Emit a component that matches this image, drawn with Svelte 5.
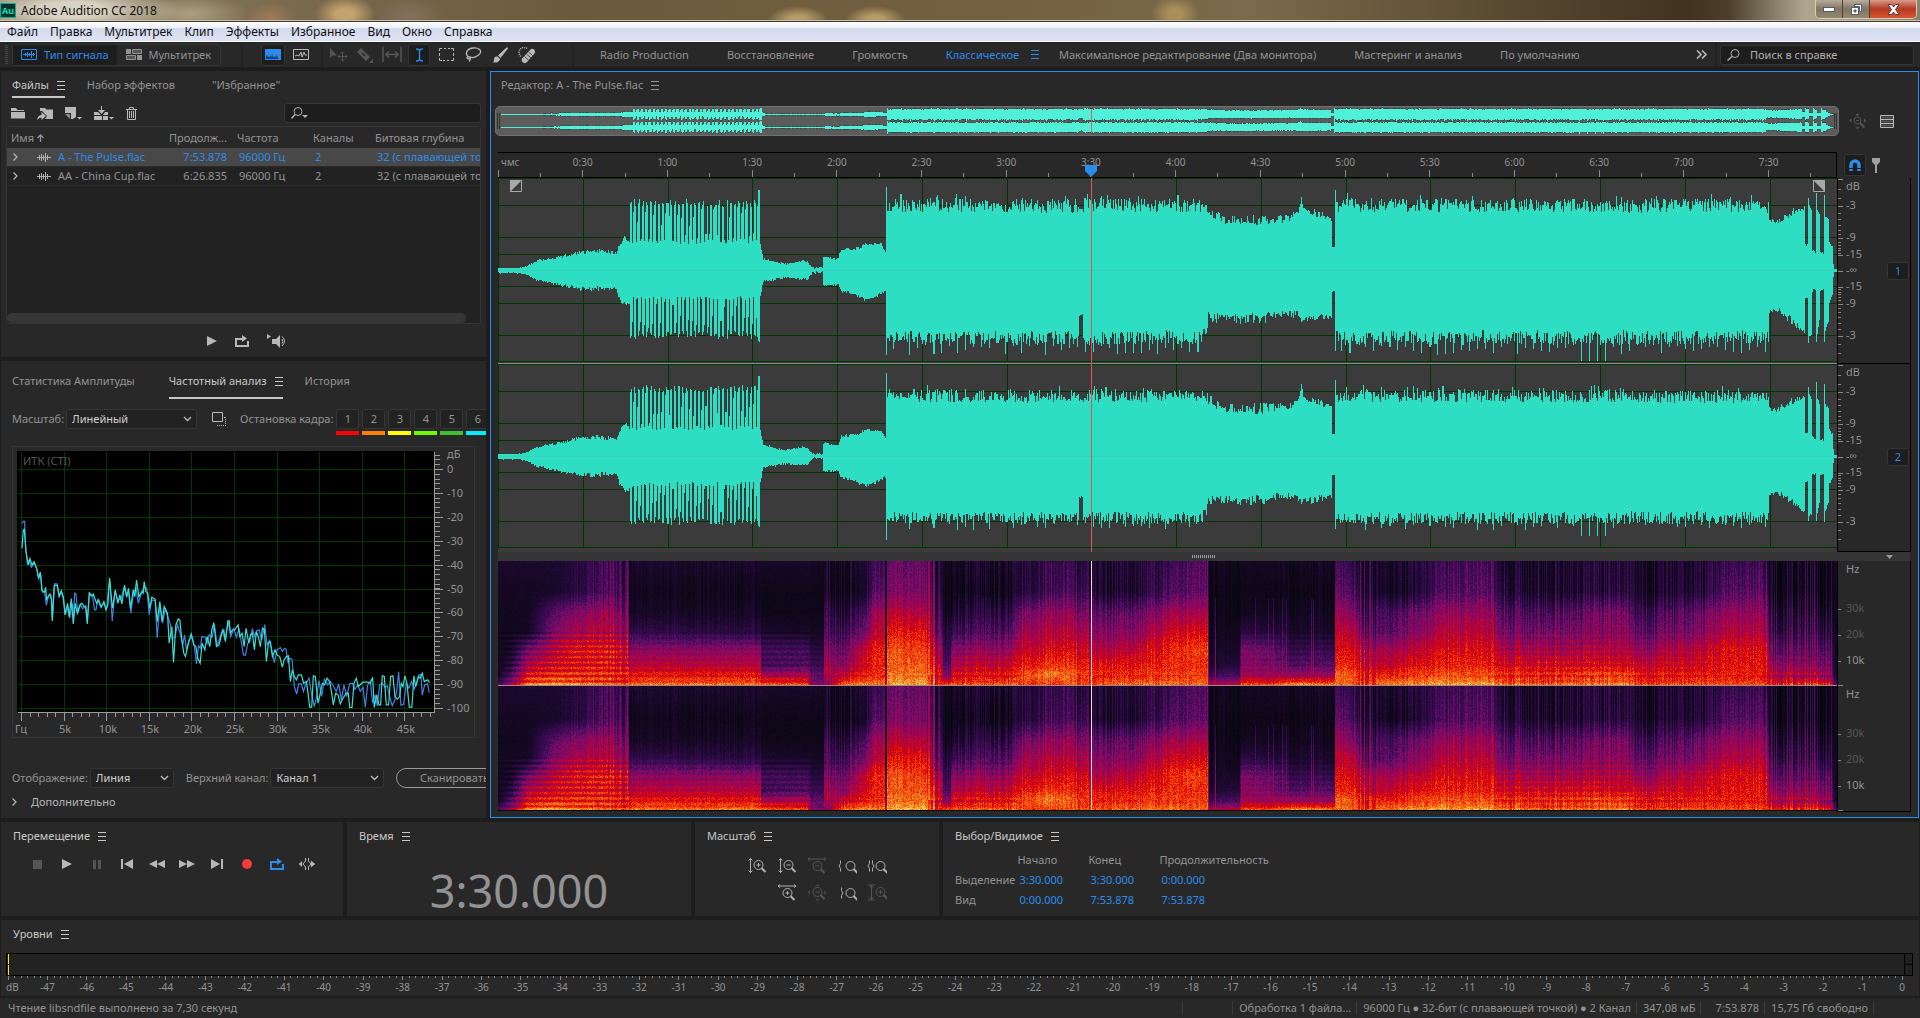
<!--
  Audio editor workspace: file list, frequency analysis, waveform and
  spectral editor, transport, zoom, selection and level meters.
-->
<script>
  const DURATION = 473.878;
  const PLAYHEAD = 210;
  // the envelope and spectrum tables below are written for this lane width
  const BASE_WIDTH = 1339;

  const menus = ['Файл', 'Правка', 'Мультитрек', 'Клип', 'Эффекты', 'Избранное', 'Вид', 'Окно', 'Справка'];

  const workspaces = [
    'Radio Production',
    'Восстановление',
    'Громкость',
    'Классическое',
    'Максимальное редактирование (Два монитора)',
    'Мастеринг и анализ',
    'По умолчанию',
  ];

  const files = [
    { name: 'A - The Pulse.flac', length: '7:53.878', rate: '96000 Гц', channels: 2, depth: '32 (с плавающей точкой)' },
    { name: 'AA - China Cup.flac', length: '6:26.835', rate: '96000 Гц', channels: 2, depth: '32 (с плавающей точкой)' },
  ];

  const holds = ['#ff0000', '#ff8000', '#ffff00', '#70f800', '#40c030', '#00f0ff'];

  const timeMarks = Array.from({ length: 15 }, (_, i) => (i + 1) * 30);
  const halfMarks = Array.from({ length: 16 }, (_, i) => i * 30 + 15);
  const levelMarks = Array.from({ length: 48 }, (_, i) => i - 47);
  const levelTicks = Array.from({ length: 289 }, (_, i) => i);

  const dbLabels = [-3, -9, -15];
  const dbTicks = [0, -1, -2, -3, -4, -5, -6, -7, -8, -9, -10, -11, -12, -13, -14, -15];

  const clock = (s) => `${Math.floor(s / 60)}:${String(s % 60).padStart(2, '0')}`;
  const pct = (s) => `${(s / DURATION) * 100}%`;
  const dbOffset = (db) => Math.round(92 * Math.pow(10, db / 20));

  function hash(a, b) {
    let n = Math.imul(a + 1, 374761393) ^ Math.imul(b + 7, 668265263);
    n = Math.imul(n ^ (n >>> 13), 1274126177);
    n = Math.imul(n ^ (n >>> 15), 668265263);
    return ((n ^ (n >>> 16)) >>> 0) / 4294967296;
  }

  // [x, top, bottom, jitter]
  const envelope = [
    [0, 2, 2, 1], [20, 2, 2, 1], [29, 4, 4, 1], [38, 9, 9, 2], [61, 13, 14, 3], [84, 18, 18, 4],
    [102, 19, 18, 5], [118, 17, 17, 4], [121, 25, 28, 4], [127, 33, 34, 4], [131, 28, 32, 3],
    [132, 66, 66, 5], [259, 66, 66, 5], [260, 80, 70, 1], [261, 80, 70, 1], [262, 25, 25, 2], [265, 11, 10, 2],
    [286, 6, 7, 2], [304, 9, 8, 2], [309, 8, 8, 2], [314, 2, 2, 2], [324, 2, 1, 2], [325, 13, 14, 2],
    [339, 11, 14, 2], [343, 20, 20, 3], [359, 22, 25, 3], [368, 26, 29, 3], [382, 26, 23, 3], [387, 18, 20, 2],
    [388, 83, 83, 1], [389, 65, 67, 14], [580, 64, 67, 14], [581, 60, 44, 3], [584, 60, 44, 3], [585, 65, 67, 14],
    [702, 64, 66, 14], [708, 62, 62, 12], [710, 60, 46, 12], [725, 50, 48, 9], [762, 50, 48, 12],
    [789, 52, 42, 9], [798, 57, 44, 7], [801, 60, 46, 6], [803, 74, 50, 5], [805, 62, 48, 5], [813, 58, 48, 7],
    [821, 56, 46, 8], [833, 52, 44, 7],
    [834, 23, 20, 1], [836, 23, 20, 1], [837, 80, 80, 1], [838, 65, 67, 14], [1270, 64, 66, 14],
    [1271, 50, 42, 4], [1278, 48, 38, 6], [1294, 58, 50, 8], [1306, 62, 61, 4], [1307, 25, 27, 2],
    [1309, 25, 27, 2], [1310, 72, 72, 1], [1311, 65, 66, 2], [1313, 60, 64, 2], [1314, 20, 20, 2],
    [1317, 18, 18, 2], [1318, 78, 70, 2], [1319, 60, 62, 2], [1321, 56, 50, 3], [1322, 18, 20, 2],
    [1325, 17, 18, 2], [1326, 75, 72, 1], [1327, 54, 60, 3], [1330, 50, 50, 3], [1331, 27, 30, 3],
    [1334, 23, 24, 2], [1335, 6, 6, 2], [1336, 1, 1, 1], [1339, 1, 1, 0],
  ];

  function between(table, x) {
    let i = 0;
    while (i < table.length - 2 && table[i + 1][0] <= x) i++;
    const a = table[i];
    const b = table[i + 1];
    const k = Math.min(1, Math.max(0, (x - a[0]) / (b[0] - a[0])));
    return a.map((v, n) => v + (b[n] - v) * k);
  }

  function peaks(x, channel) {
    let [, top, bottom, jitter] = between(envelope, x);
    const r = hash(x, 11 + channel * 40);
    const q = hash(x, 23 + channel * 40);
    const dense = (x > 388 && x < 706) || (x > 837 && x < 1271);

    if (x > 132 && x < 259) {
      const up = x % 4 < 2;
      top = up ? 63 + r * 8 : 26 + (x % 4 === 3 ? r * 38 : r * 5);
      bottom = up ? 60 + q * 8 : 25 + (x % 4 === 2 ? q * 34 : q * 4);
    } else {
      top += (r - 0.5) * jitter;
      bottom += (q - 0.5) * jitter;
    }
    if (dense) {
      if (hash(x, 57 + channel) > 0.87) top += 5;
      if (x % 8 === 3) bottom = x > 1075 && x < 1115 ? 90 : 74 + q * 10;
      if (channel === 1) {
        top *= 0.93;
        bottom = bottom > 73 ? bottom - 11 : bottom * 0.92;
      }
    } else if (channel === 1 && x > 388) {
      top *= 0.95;
      bottom *= 0.9;
    }
    return [top, bottom];
  }

  function plot(node, draw) {
    const render = () => {
      node.width = node.clientWidth;
      node.height = node.clientHeight;
      draw(node.getContext('2d'), node.width, node.height);
    };
    const observer = new ResizeObserver(render);
    observer.observe(node);
    render();
    return { destroy: () => observer.disconnect() };
  }

  const drawWave = (channel) => (ctx, w, h) => {
    const mid = Math.floor(h / 2);
    ctx.fillStyle = '#3b3b3b';
    ctx.fillRect(0, 0, w, h);
    ctx.fillStyle = '#003600';
    for (const off of [-92, -65, -33, -16, 16, 33, 65, 91]) ctx.fillRect(0, mid + off, w, 1);
    for (const t of [0, ...timeMarks]) ctx.fillRect(Math.round((t / DURATION) * w), 0, 1, h);
    ctx.fillStyle = '#2ddec3';
    for (let x = 0; x < w; x++) {
      const [top, bottom] = peaks(Math.floor((x / w) * BASE_WIDTH), channel);
      ctx.fillRect(x, Math.round(mid - top), 1, Math.round(top + bottom) + 1);
    }
    ctx.fillStyle = 'rgba(70, 190, 170, 0.4)';
    ctx.fillRect(0, mid, w, 1);
  };

  const drawOverview = (ctx, w, h) => {
    ctx.clearRect(0, 0, w, h);
    for (const channel of [0, 1]) {
      const mid = channel ? h - 8 : 7;
      for (let x = 0; x < w; x++) {
        const [top, bottom] = peaks(Math.floor((x / w) * BASE_WIDTH), channel);
        const up = Math.min(6, Math.floor(top * 0.084));
        const down = Math.min(6, Math.floor(bottom * 0.076));
        ctx.fillStyle = '#2c4e4a';
        if (hash(x, 71) > 0.5 && x > 40) ctx.fillRect(x, mid - up - 1, 1, up + down + 3);
        ctx.fillStyle = '#50f0d8';
        ctx.fillRect(x, mid - up, 1, up + down + 1);
      }
    }
  };

  // heights of the columns in the spectrum table, from 0 Hz to the top
  const bands = [0, 0.07, 0.15, 0.28, 0.42, 0.58, 0.75, 1];
  // [x, ...one level for each band, stripes, harmonics]
  const spectrum = [
    [0, 0.3, 0.1, 0.08, 0.08, 0.08, 0.08, 0.1, 0.14, 0, 0],
    [12, 0.5, 0.34, 0.2, 0.1, 0.08, 0.08, 0.1, 0.14, 0, 1],
    [29, 0.85, 0.7, 0.6, 0.42, 0.1, 0.08, 0.1, 0.14, 0, 1],
    [56, 0.88, 0.76, 0.68, 0.62, 0.48, 0.38, 0.12, 0.15, 0, 1],
    [79, 0.86, 0.78, 0.7, 0.7, 0.58, 0.48, 0.2, 0.2, 0.3, 1],
    [102, 0.86, 0.78, 0.72, 0.72, 0.62, 0.55, 0.34, 0.3, 0.5, 1],
    [129, 0.86, 0.78, 0.68, 0.7, 0.56, 0.48, 0.38, 0.32, 1.3, 0.8],
    [131, 0.86, 0.74, 0.6, 0.5, 0.3, 0.16, 0.1, 0.14, 0.8, 0.4],
    [135, 0.86, 0.74, 0.62, 0.5, 0.24, 0.1, 0.07, 0.14, 0.2, 0.3],
    [262, 0.88, 0.74, 0.62, 0.5, 0.22, 0.12, 0.07, 0.14, 0.3, 0.3],
    [263, 0.8, 0.58, 0.3, 0.3, 0.14, 0.05, 0.05, 0.12, 0, 0.6],
    [309, 0.78, 0.6, 0.35, 0.3, 0.12, 0.05, 0.05, 0.12, 0, 0.6],
    [313, 0.5, 0.4, 0.28, 0.2, 0.1, 0.06, 0.05, 0.12, 0.2, 0.2],
    [325, 0.45, 0.4, 0.28, 0.2, 0.1, 0.06, 0.05, 0.12, 0.2, 0.2],
    [326, 0.5, 0.6, 0.58, 0.5, 0.36, 0.3, 0.15, 0.15, 0.7, 0.2],
    [345, 0.9, 0.68, 0.52, 0.42, 0.3, 0.18, 0.08, 0.12, 0.7, 0.2],
    [365, 0.92, 0.75, 0.68, 0.64, 0.44, 0.32, 0.12, 0.18, 0.4, 0.2],
    [377, 0.9, 0.78, 0.76, 0.76, 0.64, 0.58, 0.38, 0.3, 0.4, 0],
    [386, 0.9, 0.78, 0.76, 0.76, 0.64, 0.58, 0.38, 0.3, 0.4, 0],
    [387, 0.7, 0.5, 0.35, 0.3, 0.15, 0.1, 0.1, 0.1, 0, 0],
    [388, 0.7, 0.5, 0.35, 0.3, 0.15, 0.1, 0.1, 0.1, 0, 0],
    [389, 0.95, 0.88, 0.84, 0.83, 0.73, 0.62, 0.46, 0.4, 0.3, 0],
    [428, 0.97, 0.88, 0.83, 0.8, 0.72, 0.6, 0.46, 0.4, 0.3, 0],
    [430, 0.92, 0.84, 0.76, 0.7, 0.6, 0.5, 0.4, 0.34, 1.6, 0],
    [443, 0.9, 0.78, 0.66, 0.6, 0.42, 0.36, 0.28, 0.24, 1.6, 0],
    [445, 0.85, 0.5, 0.35, 0.26, 0.2, 0.1, 0.06, 0.12, 0.5, 0],
    [452, 0.85, 0.5, 0.35, 0.26, 0.2, 0.1, 0.06, 0.12, 0.5, 0],
    [453, 0.85, 0.72, 0.62, 0.5, 0.3, 0.16, 0.08, 0.14, 0.6, 0.3],
    [515, 0.88, 0.76, 0.66, 0.55, 0.38, 0.26, 0.1, 0.16, 0.7, 0.3],
    [524, 0.85, 0.84, 0.75, 0.66, 0.57, 0.46, 0.2, 0.2, 0.5, 0],
    [552, 0.84, 0.92, 0.8, 0.7, 0.62, 0.54, 0.32, 0.28, 0.5, 0],
    [589, 0.85, 0.8, 0.74, 0.68, 0.58, 0.46, 0.28, 0.2, 0.8, 0],
    [598, 0.86, 0.77, 0.71, 0.58, 0.48, 0.36, 0.14, 0.16, 0.6, 0],
    [635, 0.9, 0.79, 0.72, 0.63, 0.5, 0.4, 0.15, 0.18, 0.6, 0],
    [671, 0.9, 0.81, 0.77, 0.76, 0.68, 0.56, 0.34, 0.28, 0.5, 0],
    [699, 0.88, 0.82, 0.78, 0.82, 0.71, 0.6, 0.42, 0.38, 0.3, 0],
    [709, 0.88, 0.82, 0.78, 0.8, 0.7, 0.6, 0.42, 0.38, 0.3, 0],
    [711, 0.6, 0.3, 0.15, 0.1, 0.08, 0.05, 0.05, 0.08, 0.3, 0],
    [741, 0.65, 0.35, 0.2, 0.12, 0.08, 0.05, 0.05, 0.08, 0.3, 0],
    [743, 0.8, 0.58, 0.5, 0.46, 0.22, 0.08, 0.05, 0.1, 0.1, 0.3],
    [772, 0.8, 0.54, 0.46, 0.4, 0.2, 0.08, 0.05, 0.1, 0.1, 0.3],
    [794, 0.92, 0.56, 0.36, 0.25, 0.14, 0.08, 0.05, 0.1, 0.3, 0.3],
    [836, 0.88, 0.55, 0.38, 0.26, 0.14, 0.08, 0.06, 0.12, 0.4, 0.3],
    [837, 0.88, 0.86, 0.76, 0.7, 0.63, 0.54, 0.4, 0.28, 0.3, 0],
    [858, 0.88, 0.84, 0.76, 0.7, 0.62, 0.48, 0.32, 0.24, 0.5, 0],
    [861, 0.86, 0.78, 0.67, 0.6, 0.46, 0.34, 0.22, 0.18, 1.3, 0],
    [876, 0.86, 0.76, 0.62, 0.56, 0.38, 0.3, 0.18, 0.16, 1.3, 0],
    [879, 0.88, 0.76, 0.62, 0.56, 0.34, 0.3, 0.1, 0.12, 0.3, 0],
    [909, 0.93, 0.8, 0.7, 0.61, 0.46, 0.38, 0.12, 0.18, 0.5, 0],
    [945, 0.97, 0.85, 0.76, 0.71, 0.62, 0.54, 0.35, 0.3, 0.5, 0],
    [991, 0.97, 0.85, 0.76, 0.71, 0.64, 0.56, 0.4, 0.34, 0.5, 0],
    [1005, 0.92, 0.8, 0.69, 0.6, 0.46, 0.36, 0.2, 0.15, 0.9, 0.3],
    [1051, 0.88, 0.78, 0.69, 0.58, 0.46, 0.34, 0.15, 0.15, 0.8, 0.4],
    [1101, 0.9, 0.83, 0.7, 0.6, 0.5, 0.44, 0.2, 0.2, 0.7, 0.4],
    [1127, 0.95, 0.84, 0.7, 0.63, 0.54, 0.5, 0.25, 0.22, 0.6, 0.3],
    [1134, 0.84, 0.75, 0.65, 0.52, 0.38, 0.26, 0.12, 0.12, 0.8, 0.3],
    [1207, 0.86, 0.75, 0.69, 0.64, 0.5, 0.42, 0.2, 0.18, 0.6, 0.2],
    [1225, 0.85, 0.75, 0.72, 0.7, 0.6, 0.52, 0.34, 0.26, 0.4, 0],
    [1269, 0.85, 0.75, 0.72, 0.7, 0.6, 0.52, 0.38, 0.28, 0.6, 0],
    [1271, 0.82, 0.66, 0.54, 0.42, 0.3, 0.22, 0.1, 0.1, 1.3, 0.2],
    [1332, 0.88, 0.62, 0.5, 0.4, 0.28, 0.2, 0.1, 0.1, 1.3, 0.2],
    [1336, 0.4, 0.2, 0.16, 0.12, 0.1, 0.08, 0.08, 0.1, 0, 0],
    [1339, 0.3, 0.1, 0.08, 0.08, 0.08, 0.08, 0.08, 0.1, 0, 0],
  ];

  // [level, r, g, b]
  const heat = [
    [0, 8, 7, 14], [0.14, 26, 8, 44], [0.3, 62, 12, 88], [0.45, 118, 12, 104], [0.56, 160, 4, 84],
    [0.66, 200, 4, 30], [0.73, 226, 14, 4], [0.82, 250, 74, 6], [0.9, 255, 134, 34], [1, 255, 226, 110],
  ];
  const palette = Array.from({ length: 256 }, (_, i) => between(heat, i / 255).slice(1));

  const drawSpectrum = (channel) => (ctx, w, h) => {
    const image = ctx.createImageData(w, h);
    for (let x = 0; x < w; x++) {
      const bx = Math.floor((x / w) * BASE_WIDTH);
      const row = between(spectrum, bx);
      const stripes = row[9];
      const harmonics = row[10];
      const stripe = (hash(bx, 5) - 0.5) * 0.34 * stripes + (bx % 3 === 0 ? -0.06 * stripes : 0);
      const floor = hash(bx, 9) * 0.12;
      const transient = (bx > 711 && bx < 836 && hash(bx, 31) > 0.9) || (bx > 452 && bx < 524 && bx % 8 === 4);
      for (let y = 0; y < h; y++) {
        const f = ((h - 1 - y) / h) * (channel ? 1.03 : 1);
        let i = 0;
        while (i < bands.length - 2 && bands[i + 1] < f) i++;
        const k = Math.min(1, (f - bands[i]) / (bands[i + 1] - bands[i]));
        let v = row[i + 1] + (row[i + 2] - row[i + 1]) * k;
        v += stripe * Math.min(1, 0.35 + f);
        if (f < 0.08) v -= floor * stripes;
        if (f < 0.42) v += harmonics * 0.08 * Math.sin(((h - y) * 2 * Math.PI) / 5.4);
        if (transient && f < 0.7) v = Math.max(v, 0.62 - f * 0.6);
        v += (hash(x * 131 + y, 3 + channel) - 0.5) * (v > 0.3 ? 0.15 : 0.07);
        const [r, g, b] = palette[Math.max(0, Math.min(255, Math.round(v * 255)))];
        image.data.set([r, g, b, 255], (y * w + x) * 4);
      }
    }
    ctx.putImageData(image, 0, 0);
  };

  // frequency analysis traces, three units to a pixel
  const traceRight =
    '66,-80 70,-86 74,-86 77,-10 82,40 88,30 94,52 104,40 112,62 116,86 122,72 127,126 134,128 139,166 146,136 153,136 157,205 164,102 171,102 177,140 185,128 190,145 197,190 204,175 209,205 217,160 221,200 224,130 228,132 234,190 241,164 248,176 256,170 262,215 269,128 278,140 284,180 288,180 294,150 302,170 313,160 320,178 326,112 330,92 337,213 345,125 354,150 363,148 373,112 381,140 386,125 393,190 401,130 408,110 415,160 424,132 433,110 441,115 448,195 456,150 466,152 472,264 480,165 488,220 496,178 504,200 512,225 517,265 525,262 533,225 541,250 549,285 554,255 560,300 568,270 577,260 584,290 590,342 596,288 602,295 606,260 616,262 622,280 628,255 637,262 644,225 652,288 661,262 668,240 676,270 686,215 693,260 702,236 710,262 718,236 723,265 731,315 737,316 744,280 750,275 758,236 764,260 771,242 778,240 786,270 795,224 802,285 809,272 816,300 824,338 832,300 842,293 848,305 854,296 859,298 865,340 870,325 877,328 884,410 891,433 897,402 905,402 911,425 919,400 928,385 935,430 944,470 951,440 958,392 966,440 974,388 984,405 992,395 1002,410 1010,425 1017,402 1025,450 1033,405 1041,440 1050,402 1058,400 1066,418 1074,405 1082,425 1090,412 1097,472 1104,405 1112,395 1119,460 1127,435 1133,468 1140,405 1148,400 1156,412 1163,408 1170,440 1178,468 1186,450 1192,420 1197,366 1204,466 1212,464 1220,400 1228,415 1236,395 1244,418 1252,400 1258,375 1264,374 1268,436 1275,405 1284,402 1289,428';
  const traceLeft =
    '66,-5 70,-60 73,-62 78,5 85,45 90,26 96,45 102,35 110,55 116,85 121,66 126,122 134,126 137,112 140,148 150,132 155,150 157,213 163,106 172,106 178,138 184,122 190,140 195,195 203,160 208,200 214,146 220,222 226,160 232,190 240,165 246,160 252,170 258,168 262,222 268,130 275,138 280,132 290,160 296,150 304,172 312,155 318,180 324,165 329,84 335,150 338,175 346,120 354,160 360,135 366,162 374,105 380,140 386,115 392,175 400,120 405,140 410,90 417,140 426,125 430,130 433,95 438,125 444,130 449,175 456,142 466,148 472,215 480,155 487,215 493,170 503,190 508,280 516,230 521,338 528,225 535,207 540,210 546,270 552,310 557,320 566,280 574,252 582,285 588,290 594,325 601,340 607,280 615,300 622,260 630,290 636,240 642,218 650,290 658,285 666,250 672,240 677,275 684,213 688,212 692,250 698,240 706,238 715,225 720,260 727,250 733,290 739,235 747,280 752,255 758,250 764,300 770,245 776,262 782,290 788,235 794,240 800,335 806,280 812,275 818,320 826,300 832,315 840,320 848,352 853,330 860,320 866,318 872,395 878,360 884,380 890,390 896,375 905,375 912,400 920,395 925,430 930,472 936,472 941,378 947,380 955,460 962,430 968,400 975,405 982,385 990,395 996,430 1001,465 1008,430 1015,435 1022,462 1030,445 1040,430 1046,430 1050,473 1057,473 1063,400 1070,385 1076,410 1090,397 1105,397 1112,400 1119,382 1124,473 1131,435 1138,465 1143,465 1148,378 1154,380 1160,465 1167,465 1173,380 1180,378 1186,440 1193,448 1200,440 1205,400 1210,410 1216,378 1222,400 1229,472 1237,472 1243,378 1248,410 1256,380 1262,385 1268,370 1274,395 1284,390 1290,398';
</script>

{#snippet burger()}
  <svg width="8" height="9" viewBox="0 0 8 9" aria-hidden="true">
    <path d="M0 .5h8M0 4.5h8M0 8.5h8" stroke="currentColor" fill="none" />
  </svg>
{/snippet}

{#snippet chevron()}
  <svg class="chevron" width="9" height="6" viewBox="0 0 9 6" aria-hidden="true">
    <path d="M1 1l3.500 3.500L8 1" stroke="#b8b8b8" stroke-width="1.400" fill="none" />
  </svg>
{/snippet}

{#snippet lens(x, y, sign)}
  <circle cx={x} cy={y} r="4.500" />
  <path d="M{x + 3} {y + 3}l4 4" stroke-width="2" />
  {#if sign}<path d="M{x - 2} {y}h4" />{/if}
  {#if sign === '+'}<path d="M{x} {y - 2}v4" />{/if}
{/snippet}

{#snippet waveGlyph()}
  <svg width="14" height="9" viewBox="0 0 14 9" aria-hidden="true">
    <path d="M0 4.500h14M2.500 2v5M4.500 1v7M6.500 2v5M8.500 0v9M10.500 2v5" stroke="currentColor" fill="none" />
  </svg>
{/snippet}

<div class="app">
  <header class="titlebar">
    <span class="logo">Au</span>
    <span class="title">Adobe Audition CC 2018</span>
    <div class="window-buttons">
      <button aria-label="Свернуть">
        <svg width="14" height="8" viewBox="0 0 14 8"><rect x="1.500" y="2.500" width="11" height="4" fill="#fff" stroke="#555b6e" /></svg>
      </button>
      <button aria-label="Развернуть">
        <svg width="13" height="13" viewBox="0 0 13 13"><path d="M4.500 1.500h7v7h-2v-5h-5z" fill="#fff" stroke="#555b6e" /><path d="M1.500 4.500h7v7h-7z" fill="#fff" stroke="#555b6e" /><path d="M4 7h2v2H4z" fill="#8c8c70" stroke="#555b6e" /></svg>
      </button>
      <button class="close" aria-label="Закрыть">
        <svg width="13" height="11" viewBox="0 0 13 11"><path d="M1 .5h3.500l2 2.500 2-2.500H12L8.500 5.500l3.500 5H8.500l-2-2.500-2 2.500H1l3.500-5z" fill="#fff" stroke="#5a3a3a" /></svg>
      </button>
    </div>
  </header>

  <nav class="menubar">
    {#each menus as item}
      <button>{item}</button>
    {/each}
  </nav>

  <div class="toolbar">
    <span class="grip"></span>
    <div class="mode">
      <button class="active">
        <svg width="16" height="11" viewBox="0 0 16 11" fill="none" stroke="currentColor"><path d="M.5.5h15v10H.5zM2 5.500h12M4.500 4v3M6.500 3v5M8.500 4v3M10.500 2v7M12.500 4v3" /></svg>
        Тип сигнала
      </button>
      <button>
        <svg width="16" height="11" viewBox="0 0 16 11"><path d="M0 0h5v5H0z" fill="currentColor" /><path d="M6.500.5h9v4h-9zM.5 6.500h9v4h-9z" fill="#555" stroke="currentColor" /><path d="M11 6h5v5h-5z" fill="currentColor" /></svg>
        Мультитрек
      </button>
    </div>
    <span class="rule"></span>
    <div class="views">
      <button class="tool on" aria-label="Спектр">
        <svg width="16" height="11" viewBox="0 0 16 11"><path d="M0 0h16v11H0z" fill="#2d8ceb" /><path d="M1 10V7l1-1v3l1-4v4l1-2 1 2V5l1 4 1-3v3l1-5v5l1-2 1 2V6l1 3 1-4v4l1-2v3z" fill="#103a66" /></svg>
      </button>
      <button class="tool" aria-label="Высота тона">
        <svg width="16" height="11" viewBox="0 0 16 11" fill="none" stroke="#b8b8b8"><path d="M.5.5h15v10H.5zM2 7l2-1 2 1 2-4 1 5 2-5 1 3h2" /></svg>
      </button>
    </div>
    <span class="rule"></span>
    <div class="tools">
      <button class="tool dim" aria-label="Перемещение">
        <svg width="19" height="16" viewBox="0 0 19 16"><path d="M1 1v10l2.500-2.500H8z" fill="currentColor" /><path d="M13.500 5v9M9 9.500h9M12 6.500l1.500-1.500L15 6.500M12 12.500l1.500 1.500 1.500-1.500M10.500 8L9 9.500l1.500 1.500M16.500 8L18 9.500 16.500 11" fill="none" stroke="currentColor" /></svg>
      </button>
      <button class="tool dim" aria-label="Подрезка">
        <svg width="18" height="16" viewBox="0 0 18 16"><path d="M5 1l9 9-4 4-9-9z" fill="currentColor" /><path d="M6 6l3 3" stroke="#282828" stroke-width="1.500" /><path d="M17 12v4h-4z" fill="currentColor" /></svg>
      </button>
      <button class="tool dim" aria-label="Сдвиг">
        <svg width="20" height="15" viewBox="0 0 20 15" fill="none" stroke="currentColor" stroke-width="1.500"><path d="M1 0v15M19 0v15M4 7.500h12M7 4.500l-3 3 3 3M13 4.500l3 3-3 3" /></svg>
      </button>
      <button class="tool on" aria-label="Выделение времени">
        <svg width="9" height="14" viewBox="0 0 9 14" fill="none" stroke="#2d8ceb" stroke-width="1.300"><path d="M1 1q3.500 0 3.500 2v8q0 2-3.500 2M8 1q-3.500 0-3.500 2v8q0 2 3.500 2" /></svg>
      </button>
      <button class="tool" aria-label="Область">
        <svg width="15" height="13" viewBox="0 0 15 13" fill="none" stroke="#b8b8b8"><path d="M.5 3V.5H3M5 .5h2M9 .5h2M12 .5h2.500V3M14.500 5v3M14.500 10v2.500H12M10 12.500H8M6 12.500H4M3 12.500H.5V10M.5 8V5" /></svg>
      </button>
      <button class="tool" aria-label="Лассо">
        <svg width="17" height="15" viewBox="0 0 17 15" fill="none" stroke="#b8b8b8" stroke-width="1.300"><path d="M5 10.500C-1 8 1 2 8 1c6-.5 9 2.500 7 5.500S8 11.500 5 10q-2-1-3 .5c0 2 3 1.500 3 0q1 2-1 4" /></svg>
      </button>
      <button class="tool" aria-label="Кисть">
        <svg width="16" height="16" viewBox="0 0 16 16" fill="#b8b8b8"><path d="M15 0L6 8.500l2.500 2.500L16 1.500z" /><path d="M5.500 9.500Q2 9 2 12.500T0 15q5 1.500 7-1 1-1 1-2z" /></svg>
      </button>
      <button class="tool" aria-label="Восстановление">
        <svg width="18" height="16" viewBox="0 0 18 16"><path d="M13 2a3 3 0 0 1 3.500 4.500L9 15a3 3 0 0 1-4.500-4z" fill="#b8b8b8" /><path d="M8.500 7l4.500 4M10.500 5l4 3.500M6.500 9.500l4 3.500" stroke="#282828" stroke-width=".8" /><path d="M9 1.500a5 5 0 0 0-6 8" fill="none" stroke="#b8b8b8" stroke-width="1.500" stroke-dasharray="1 1" /></svg>
      </button>
    </div>
    <span class="rule"></span>
    <div class="workspaces">
      {#each workspaces as item}
        <button class:active={item === 'Классическое'}>
          {item}
          {#if item === 'Классическое'}{@render burger()}{/if}
        </button>
      {/each}
    </div>
    <button class="more" aria-label="Ещё">
      <svg width="11" height="9" viewBox="0 0 11 9" fill="none" stroke="#b8b8b8" stroke-width="1.600"><path d="M1 .5l4 4-4 4M6 .5l4 4-4 4" /></svg>
    </button>
    <span class="rule"></span>
    <label class="search help">
      <svg width="13" height="12" viewBox="0 0 13 12" fill="none" stroke="#b0b0b0"><circle cx="8" cy="4.500" r="4" /><path d="M5 7.500L.5 11.500" stroke-width="1.500" /></svg>
      <input type="text" aria-label="Поиск в справке" placeholder="Поиск в справке" />
    </label>
  </div>

  <main class="workspace">
    <div class="side">
      <section class="panel files">
        <div class="tabs" role="tablist">
          <button role="tab" aria-selected="true">Файлы {@render burger()}</button>
          <button role="tab" aria-selected="false">Набор эффектов</button>
          <button role="tab" aria-selected="false">"Избранное"</button>
        </div>
        <div class="file-tools">
          <button aria-label="Открыть"><svg width="14" height="12" viewBox="0 0 14 12"><path d="M0 1h5l1.500 2H13v1H0zM0 5h14v6.500H0z" fill="#b8b8b8" /></svg></button>
          <button aria-label="Импорт"><svg width="16" height="13" viewBox="0 0 16 13"><path d="M3 1h5l1.500 1.500H16V12H8l2-3-5-5H3z" fill="#b8b8b8" /><path d="M0 13q1-5 4.500-5V5L9 9l-4.500 4v-2.500Q2 10.500 0 13z" fill="#b8b8b8" /></svg></button>
          <button aria-label="Создать"><svg width="17" height="13" viewBox="0 0 17 13"><path d="M0 0h11v10L8 12H6V6H0z" fill="#b8b8b8" /><path d="M0 7h5v5z" fill="#8a8a8a" /><path d="M12 10h5l-2.500 2.500z" fill="#b8b8b8" /></svg></button>
          <button aria-label="Вставить в мультитрек"><svg width="20" height="15" viewBox="0 0 20 15"><path d="M0 6h4l3 3H0zM0 10h8v4H0zM9 10h5v4H9zM11 6h3v3H9z" fill="#b8b8b8" /><path d="M7 0h1v4h3L7.500 8 4 4h3z" fill="#b8b8b8" /><path d="M15 11h5l-2.500 2.500z" fill="#b8b8b8" /></svg></button>
          <button aria-label="Удалить"><svg width="11" height="13" viewBox="0 0 11 13" fill="none" stroke="#b8b8b8"><path d="M0 2.500h11M3.500 2V.5h4V2M1.500 3v9.500h8V3M3.500 4v7M5.500 4v7M7.500 4v7" /></svg></button>
          <label class="search">
            <svg width="17" height="12" viewBox="0 0 17 12"><g fill="none" stroke="#b0b0b0"><circle cx="7" cy="4.500" r="4" /><path d="M4 7.500L.5 11.500" stroke-width="1.500" /></g><path d="M11 8h6l-3 3z" fill="#b0b0b0" /></svg>
            <input type="text" aria-label="Поиск файлов" />
          </label>
        </div>
        <div class="file-list">
          <table>
            <thead>
              <tr><th>Имя <svg width="7" height="8" viewBox="0 0 7 8"><path d="M3.500 8V1M.5 4l3-3 3 3" fill="none" stroke="currentColor" stroke-width="1.300" /></svg></th><th class="length">Продолж...</th><th>Частота</th><th>Каналы</th><th>Битовая глубина</th></tr>
            </thead>
            <tbody>
              {#each files as file, i}
                <tr class:selected={i === 0}>
                  <td>
                    <span class="name">
                      <button aria-label="Развернуть файл"><svg width="5" height="8" viewBox="0 0 5 8"><path d="M.5.5L4 4 .5 7.500" fill="none" stroke="#b8b8b8" stroke-width="1.200" /></svg></button>
                      <i>{@render waveGlyph()}</i>
                      {file.name}
                    </span>
                  </td>
                  <td class="length">{file.length}</td>
                  <td>{file.rate}</td>
                  <td>{file.channels}</td>
                  <td>{file.depth}</td>
                </tr>
              {/each}
            </tbody>
          </table>
          <div class="scrollbar"></div>
        </div>
        <div class="preview">
          <button aria-label="Воспроизвести"><svg width="10" height="10" viewBox="0 0 10 10"><path d="M0 0l10 5-10 5z" fill="#b8b8b8" /></svg></button>
          <button aria-label="Повтор"><svg width="14" height="12" viewBox="0 0 14 12"><path d="M4 4H1v7h12V6" fill="none" stroke="#b8b8b8" stroke-width="2" /><path d="M4 3h3V0l5 3.500-5 3.500V5H4z" fill="#b8b8b8" /></svg></button>
          <button aria-label="Автовоспроизведение"><svg width="20" height="14" viewBox="0 0 20 14"><path d="M0 0l4 2.500L0 5zM5 5h4l4-4v13l-4-4H5z" fill="#b8b8b8" /><path d="M15 5q1.500 2.500 0 4.500M15 2.500q5 4.500 0 9.500" fill="none" stroke="#b8b8b8" /></svg></button>
        </div>
      </section>

      <section class="panel analysis">
        <div class="tabs roomy" role="tablist">
          <button role="tab" aria-selected="false">Статистика Амплитуды</button>
          <button role="tab" aria-selected="true">Частотный анализ {@render burger()}</button>
          <button role="tab" aria-selected="false">История</button>
        </div>
        <div class="controls">
          <label for="scale">Масштаб:</label>
          <div class="select scale"><select id="scale"><option>Линейный</option></select>{@render chevron()}</div>
          <button class="copy" aria-label="Копировать"><svg width="15" height="14" viewBox="0 0 15 14" fill="none" stroke="#b8b8b8"><path d="M.5.5h10v9H.5z" /><path d="M13.500 5v9M5 13.500h9M12 5.500h2" stroke-dasharray="1 1" /></svg></button>
          <span>Остановка кадра:</span>
          {#each holds as color, i}
            <button class="hold" style:--hold={color}>{i + 1}</button>
          {/each}
        </div>
        <div class="graph">
          <svg viewBox="0 0 461 290" role="img" aria-label="Частотный анализ">
            <rect x="4" y="4" width="417" height="261" fill="#000" />
            <g stroke="#003800" shape-rendering="crispEdges">
              {#each Array(10) as _, i}<path d="M{Math.round(8 + i * 42.6) + 0.5} 5v260" />{/each}
              {#each Array(11) as _, i}<path d="M5 {Math.round(22 + i * 23.9) + 0.5}h416" />{/each}
            </g>
            <text x="10" y="18" class="faint">ИТК (CTI)</text>
            <g transform="translate(-13 103) scale(0.333)" fill="none" stroke-width="3.600">
              <polyline points={traceRight} stroke="#4480e0" />
              <polyline points={traceLeft} stroke="#38e0d0" />
            </g>
            <g stroke="#9a9a9a" shape-rendering="crispEdges">
              <path d="M421.500 5v261M5 265.500h417" />
              {#each Array(11) as _, i}<path d="M422 {Math.round(22 + i * 23.9) + 0.5}h8" />{/each}
              {#each Array(54) as _, i}<path d="M422 {Math.round(7.6 + i * 4.78) + 0.5}h5" />{/each}
              {#each Array(49) as _, i}<path d="M{Math.round(8 + i * 8.52) + 0.5} 266v{i % 5 ? 4 : 8}" />{/each}
            </g>
            <text x="434" y="11">дБ</text>
            {#each Array(11) as _, i}<text x="434" y={Math.round(26 + i * 23.9)}>{i ? -i * 10 : 0}</text>{/each}
            <text x="2" y="286">Гц</text>
            {#each Array(9) as _, i}<text x={Math.round(52 + i * 42.6)} y="286" text-anchor="middle">{(i + 1) * 5}k</text>{/each}
          </svg>
        </div>
        <div class="controls">
          <label for="display">Отображение:</label>
          <div class="select display"><select id="display"><option>Линия</option></select>{@render chevron()}</div>
          <label for="channel" class="second">Верхний канал:</label>
          <div class="select channel"><select id="channel"><option>Канал 1</option></select>{@render chevron()}</div>
          <button class="scan">Сканировать</button>
        </div>
        <button class="advanced"><svg width="5" height="8" viewBox="0 0 5 8"><path d="M.5.5L4 4 .5 7.500" fill="none" stroke="currentColor" stroke-width="1.200" /></svg>Дополнительно</button>
      </section>
    </div>

    <section class="panel editor">
      <h2 class="panel-title">Редактор: A - The Pulse.flac {@render burger()}</h2>
      <div class="overview">
        <div class="navigator">
          <span class="handle"></span>
          <canvas use:plot={drawOverview}></canvas>
          <span class="handle"></span>
          <span class="needle" style:left={pct(PLAYHEAD)}></span>
        </div>
        <button class="dim" aria-label="Уменьшить"><svg width="18" height="17" viewBox="0 0 18 17" fill="none" stroke="currentColor"><circle cx="8.500" cy="7.500" r="3.500" /><path d="M7 7.500h3" /><path d="M11 10l4.500 4.500" stroke-width="2" /><path d="M6.500 2.500l2-2.500 2 2.500zM6.500 14l2 2.500 2-2.500zM2.500 5.500L0 7.500l2.500 2zM15 5.500l2.500 2-2.500 2z" fill="currentColor" stroke="none" /></svg></button>
        <button aria-label="Список"><svg width="14" height="13" viewBox="0 0 14 13" fill="none" stroke="#b8b8b8"><path d="M.5.5h13v12H.5zM0 4.500h14M0 8.500h14" /><path d="M1 6.500h12M1 10.500h12M1 2.500h12" stroke="#555" stroke-width="2" /></svg></button>
      </div>

      <div class="timeline">
        <div class="ruler">
          <svg width="100%" height="24" aria-hidden="true">
            <text x="3" y="13">чмс</text>
            <g stroke="#8a8a8a" shape-rendering="crispEdges">
              <line x1="0.5" x2="0.5" y1="17" y2="24" />
              {#each timeMarks as t}<line x1={pct(t)} x2={pct(t)} y1="17" y2="24" />{/each}
              {#each halfMarks as t}<line x1={pct(t)} x2={pct(t)} y1="20" y2="24" />{/each}
            </g>
            {#each timeMarks as t}<text x={pct(t)} y="13" text-anchor="middle">{clock(t)}</text>{/each}
          </svg>
          <svg class="marker" style:left={pct(PLAYHEAD)} width="12" height="12" viewBox="0 0 12 12"><path d="M0 0h12v6l-6 6-6-6z" fill="#2d8ceb" /></svg>
        </div>
        <div class="snap">
          <button class="tool on" aria-label="Привязка"><svg width="12" height="13" viewBox="0 0 12 13"><path d="M2 12V6a4 4 0 0 1 8 0v6" fill="none" stroke="#2d8ceb" stroke-width="3.500" /><path d="M0 9.500h4M8 9.500h4" stroke="#1d1d1d" /></svg></button>
          <button aria-label="Маркер"><svg width="8" height="15" viewBox="0 0 8 15"><path d="M0 0h8v4L5 7v8H3V7L0 4z" fill="#a0a0a0" /></svg></button>
        </div>
      </div>

      <div class="lanes">
        {#each [0, 1] as channel}
          <div class="lane wave">
            <canvas use:plot={drawWave(channel)}></canvas>
            <div class="scale-db">
              <svg width="50" height="184" aria-hidden="true">
                <g stroke="#8a8a8a" shape-rendering="crispEdges">
                  <path d="M0 92.500h5" />
                  {#each dbTicks as db}
                    <path d="M0 {92.5 - dbOffset(db)}h{db % 3 || db === -6 || db === -12 ? 3 : 5}M0 {92.5 + dbOffset(db)}h{db % 3 || db === -6 || db === -12 ? 3 : 5}" />
                  {/each}
                </g>
                <text x="8" y="11">dB</text>
                <text x="8" y="95">-∞</text>
                {#each dbLabels as db}
                  <text x="8" y={95 - dbOffset(db)}>{db}</text>
                  <text x="8" y={95 + dbOffset(db)}>{db}</text>
                {/each}
              </svg>
              <button class="channel-toggle">{channel + 1}</button>
            </div>
          </div>
        {/each}
        <div class="splitter"><span></span><svg width="7" height="4" viewBox="0 0 7 4"><path d="M0 0h7L3.500 4z" fill="#9a9a9a" /></svg></div>
        {#each [0, 1] as channel}
          <div class="lane spectral">
            <canvas use:plot={drawSpectrum(channel)}></canvas>
            <div class="scale-db">
              <svg width="50" height="124" aria-hidden="true">
                <path d="M0 47.500h3M0 73.500h3M0 99.500h3M0 123.500h5" stroke="#8a8a8a" />
                <text x="8" y="11">Hz</text>
                <text x="8" y="50" class="faint">30k</text>
                <text x="8" y="76" class="faint">20k</text>
                <text x="8" y="102">10k</text>
              </svg>
            </div>
          </div>
        {/each}
        <div class="overlay">
          <svg class="fade" width="12" height="12" viewBox="0 0 12 12"><path d="M.5.5h11v11H.5z" fill="#3b3b3b" stroke="#a8a8a8" /><path d="M0 12V0h12z" fill="#a8a8a8" /></svg>
          <svg class="fade out" width="12" height="12" viewBox="0 0 12 12"><path d="M.5.5h11v11H.5z" fill="#3b3b3b" stroke="#a8a8a8" /><path d="M0 0h12v12z" fill="#a8a8a8" /></svg>
          <div class="playhead" style:left={pct(PLAYHEAD)}></div>
        </div>
      </div>
    </section>
  </main>

  <div class="dock">
    <section class="panel">
      <h2 class="panel-title">Перемещение {@render burger()}</h2>
      <div class="transport">
        <button class="dim" aria-label="Стоп"><svg width="9" height="9" viewBox="0 0 9 9"><path d="M0 0h9v9H0z" fill="currentColor" /></svg></button>
        <button aria-label="Воспроизвести"><svg width="10" height="10" viewBox="0 0 10 10"><path d="M0 0l10 5-10 5z" fill="currentColor" /></svg></button>
        <button class="dim" aria-label="Пауза"><svg width="8" height="9" viewBox="0 0 8 9"><path d="M0 0h3v9H0zM5 0h3v9H5z" fill="currentColor" /></svg></button>
        <button aria-label="В начало"><svg width="12" height="10" viewBox="0 0 12 10"><path d="M0 0h2v10H0zM12 0v10L3 5z" fill="currentColor" /></svg></button>
        <button aria-label="Назад"><svg width="16" height="8" viewBox="0 0 16 8"><path d="M8 0v8L0 4zM16 0v8L8 4z" fill="currentColor" /></svg></button>
        <button aria-label="Вперёд"><svg width="16" height="8" viewBox="0 0 16 8"><path d="M0 0v8l8-4zM8 0v8l8-4z" fill="currentColor" /></svg></button>
        <button aria-label="В конец"><svg width="12" height="10" viewBox="0 0 12 10"><path d="M10 0h2v10h-2zM0 0v10l9-5z" fill="currentColor" /></svg></button>
        <button aria-label="Запись"><svg width="10" height="10" viewBox="0 0 10 10"><circle cx="5" cy="5" r="5" fill="#f43a3a" /></svg></button>
        <button aria-label="Цикл"><svg width="14" height="12" viewBox="0 0 14 12"><path d="M4 4H1v7h12V6" fill="none" stroke="#2d8ceb" stroke-width="2" /><path d="M4 3h3V0l5 3.500-5 3.500V5H4z" fill="#2d8ceb" /></svg></button>
        <button aria-label="Пропуск"><svg width="16" height="12" viewBox="0 0 16 12"><path d="M6.500 0v3L4 6l2.500 3v3M9.500 0v3L12 6l-2.500 3v3M0 6h3M12 6h4" fill="none" stroke="currentColor" /><path d="M12 2.500L16 6l-4 3.500zM3 3v6L0 6z" fill="currentColor" /></svg></button>
      </div>
    </section>

    <section class="panel">
      <h2 class="panel-title">Время {@render burger()}</h2>
      <output class="time">3:30.000</output>
    </section>

    <section class="panel">
      <h2 class="panel-title">Масштаб {@render burger()}</h2>
      <div class="zoom">
        <button aria-label="Увеличить амплитуду"><svg viewBox="0 0 20 16"><path d="M3.500 1v14M1.500 3l2-2 2 2M1.500 13l2 2 2-2" />{@render lens(11.5, 7.5, '+')}</svg></button>
        <button aria-label="Уменьшить амплитуду"><svg viewBox="0 0 20 16"><path d="M3.500 1v14M1.500 3l2-2 2 2M1.500 13l2 2 2-2" />{@render lens(11.5, 7.5, '-')}</svg></button>
        <button class="dim" aria-label="Уменьшить время"><svg viewBox="0 0 20 16"><path d="M1 1.500h18M3 0L1 1.500 3 3M17 0l2 1.500L17 3" />{@render lens(10.5, 8.5, '-')}</svg></button>
        <button aria-label="К точке входа"><svg viewBox="0 0 20 16"><path d="M3.500 3v3l-1.500 2.500L3.500 11v3" />{@render lens(13.5, 8.5, '')}</svg></button>
        <button aria-label="К выделению"><svg viewBox="0 0 20 16"><path d="M2.500 3v3L1 8.500 2.500 11v3M5.500 3v3L7 8.500 5.500 11v3" />{@render lens(13.5, 8.5, '')}</svg></button>
        <span></span>
        <button aria-label="Увеличить время"><svg viewBox="0 0 20 16"><path d="M1 1.500h18M3 0L1 1.500 3 3M17 0l2 1.500L17 3" />{@render lens(10.5, 8.5, '+')}</svg></button>
        <button class="dim" aria-label="Показать всё"><svg viewBox="0 0 20 16"><path d="M9 2l1.500-2L12 2M9 14.500l1.500 1.500 1.500-1.500M3 6.500L1 8l2 1.500M17 6.500L19 8l-2 1.500" />{@render lens(10.5, 7.5, '-')}</svg></button>
        <button aria-label="К точке выхода"><svg viewBox="0 0 20 16"><path d="M4.500 3v3L6 8.500 4.500 11v3" />{@render lens(13.5, 8.5, '')}</svg></button>
        <button class="dim" aria-label="Сбросить"><svg viewBox="0 0 20 16"><path d="M4.500 1v14M2.500 3l2-2 2 2M2.500 13l2 2 2-2M1 .5h7M1 15.500h7" />{@render lens(13.5, 7.5, '+')}</svg></button>
      </div>
    </section>

    <section class="panel">
      <h2 class="panel-title">Выбор/Видимое {@render burger()}</h2>
      <table class="range">
        <thead><tr><td></td><th scope="col">Начало</th><th scope="col">Конец</th><th scope="col">Продолжительность</th></tr></thead>
        <tbody>
          <tr><th scope="row">Выделение</th><td>3:30.000</td><td>3:30.000</td><td>0:00.000</td></tr>
          <tr><th scope="row">Вид</th><td>0:00.000</td><td>7:53.878</td><td>7:53.878</td></tr>
        </tbody>
      </table>
    </section>
  </div>

  <section class="panel levels">
    <h2 class="panel-title">Уровни {@render burger()}</h2>
    <div class="meter"><div class="bars"><i></i><i></i></div><div class="clip"><i></i><i></i></div></div>
    <div class="level-scale">
      <svg width="100%" height="20" overflow="visible">
        <g stroke="#8a8a8a" shape-rendering="crispEdges">
          {#each levelTicks as i}<line x1="{(i / 288) * 100}%" x2="{(i / 288) * 100}%" y1="0" y2={i % 6 ? 2 : 4} />{/each}
        </g>
        <text x="-2" y="15">dB</text>
        {#each levelMarks as db}<text x="{((db + 48) / 48) * 100}%" y="15" text-anchor="middle">{db}</text>{/each}
      </svg>
    </div>
  </section>

  <footer class="status">
    <span class="message">Чтение libsndfile выполнено за 7,30 секунд</span>
    <span class="blank"></span>
    <span>Обработка 1 файла...</span>
    <span>96000 Гц ● 32-бит (с плавающей точкой) ● 2 Канал</span>
    <span>347,08 мБ</span>
    <span class="total">7:53.878</span>
    <span class="free">15,75 Гб свободно</span>
  </footer>
</div>

<style>
  :global(body) {
    background: #1d1d1d;
  }

  .app {
    --panel: #282828;
    --blue: #2d8ceb;
    --text: #939393;
    --bright: #c8c8c8;
    --well: #1d1d1d;
    --line: #353535;
    display: flex;
    flex-direction: column;
    min-height: 100vh;
    background: #1d1d1d;
    color: var(--text);
    font: 11px/16px 'Noto Sans', 'Open Sans', sans-serif;
  }

  svg {
    display: block;
    flex-shrink: 0;
  }

  svg text {
    fill: var(--text);
    font-size: 11px;
  }

  button {
    display: flex;
    align-items: center;
    justify-content: center;
    margin: 0;
    padding: 0;
    border: 0;
    background: none;
    color: inherit;
    font: inherit;
    white-space: nowrap;
  }

  .dim {
    color: #555;
  }

  /* window chrome */
  .titlebar {
    display: flex;
    box-sizing: border-box;
    height: 22px;
    border-bottom: 1px solid #453a2c;
    box-shadow: inset 0 -1px #c9bfae;
    background:
      radial-gradient(ellipse 110px 26px at 70px 10px, rgba(225, 220, 206, 0.9) 30%, transparent),
      radial-gradient(ellipse 60px 20px at 190px 14px, rgba(190, 180, 150, 0.7), transparent),
      radial-gradient(ellipse 30px 18px at 345px 14px, #c3a36d 30%, transparent),
      radial-gradient(ellipse 26px 16px at 270px 18px, #a07a58, transparent),
      radial-gradient(ellipse 34px 18px at 410px 16px, #86705e, transparent),
      radial-gradient(ellipse 30px 14px at 798px 20px, #b89c68 30%, transparent),
      radial-gradient(ellipse 30px 14px at 875px 20px, #b89c68 30%, transparent),
      radial-gradient(ellipse 24px 18px at 1175px 14px, #a88e58 30%, transparent),
      linear-gradient(90deg, #8a7b60, #6b5a3c 30%, #746240 55%, #7b6b4c 65%, #3f321f 88%, #4b3f2c 90%, #b0a690 94%, #8a8070);
  }

  .logo {
    box-sizing: border-box;
    width: 16px;
    height: 15px;
    margin-top: 3px;
    border: 1px solid #00b49c;
    background: #002e28;
    color: #00e4bb;
    font: bold 9px/13px 'Noto Sans', sans-serif;
    text-align: center;
  }

  .title {
    margin-left: 5px;
    color: #111;
    font-size: 12px;
    line-height: 21px;
  }

  .window-buttons {
    display: flex;
    height: 18px;
    margin: 0 3px 0 auto;
    overflow: hidden;
    border: solid #d6cdbd;
    border-width: 0 1px 1px;
    border-radius: 0 0 5px 5px;
  }

  .window-buttons button {
    width: 27px;
    border-right: 1px solid #4b4235;
    background: linear-gradient(#b7ad9d, #80755f 50%, #94896f);
  }

  .window-buttons .close {
    width: 46px;
    border-right: 0;
    background: linear-gradient(#d99a88, #b33a22 50%, #d8552c);
  }

  .menubar {
    display: flex;
    gap: 12px;
    box-sizing: border-box;
    height: 20px;
    padding: 0 7px;
    border-bottom: 1px solid #fff;
    background: linear-gradient(#fff, #eceff7 32%, #d3daec 34%, #dde3f3);
    color: #101010;
    font-size: 12px;
  }

  /* tool bar */
  .toolbar {
    display: flex;
    align-items: center;
    height: 25px;
    margin-bottom: 4px;
    padding: 0 6px 0 5px;
    background: var(--panel);
  }

  .grip {
    width: 3px;
    height: 19px;
    margin-right: 4px;
    background: repeating-linear-gradient(#484848 0 1px, transparent 1px 2px);
  }

  .mode {
    display: flex;
    width: 207px;
    height: 20px;
    margin-right: 20px;
    border: 1px solid var(--line);
    border-radius: 3px;
  }

  .mode button {
    flex: 1;
    gap: 7px;
  }

  .mode .active {
    background: var(--well);
    color: var(--blue);
  }

  .rule {
    width: 2px;
    height: 25px;
    background: #222;
  }

  .views,
  .tools {
    display: flex;
    align-items: center;
  }

  .views {
    gap: 4px;
    margin: 0 8px 0 18px;
  }

  .tool {
    width: 24px;
    height: 22px;
    border: 1px solid transparent;
    border-radius: 3px;
  }

  .tool.on {
    border-color: var(--line);
    background: var(--well);
  }

  .tools {
    gap: 5px;
    margin: 0 34px 0 4px;
  }

  .tools .tool {
    width: 22px;
  }

  .workspaces {
    display: flex;
    gap: 38px;
    margin-left: 26px;
  }

  .workspaces button {
    gap: 12px;
  }

  .workspaces .active {
    margin-right: -18px;
    color: var(--blue);
  }

  .more {
    margin: 0 8px 0 auto;
  }

  .search {
    display: flex;
    align-items: center;
    gap: 10px;
    box-sizing: border-box;
    height: 20px;
    padding: 0 6px;
    border: 1px solid var(--line);
    border-radius: 3px;
    background: var(--well);
  }

  .search input {
    flex: 1;
    min-width: 0;
    padding: 0;
    border: 0;
    outline: 0;
    background: none;
    color: #b8b8b8;
    font: inherit;
  }

  .search input::placeholder {
    color: #b0b0b0;
    opacity: 1;
  }

  .help {
    width: 194px;
    margin-left: 3px;
  }

  /* panels */
  .workspace {
    display: grid;
    flex: 1;
    grid-template-columns: minmax(0, 485fr) minmax(0, 1429fr);
    gap: 4px;
    padding: 0 1px;
  }

  .side {
    display: grid;
    grid-template-rows: 286px 1fr;
    gap: 4px;
  }

  .panel {
    min-width: 0;
    overflow: hidden;
    background: var(--panel);
  }

  .panel-title {
    display: flex;
    align-items: center;
    gap: 8px;
    height: 28px;
    margin: 0;
    padding: 0 12px;
    color: var(--bright);
    font: inherit;
  }

  .files,
  .analysis {
    display: flex;
    flex-direction: column;
  }

  .tabs {
    display: flex;
    gap: 22px;
    height: 27px;
    padding-left: 11px;
  }

  .tabs button {
    gap: 8px;
    padding-top: 3px;
    border-bottom: 2px solid transparent;
  }

  .tabs button:last-child {
    margin-left: 15px;
  }

  .tabs [aria-selected='true'] {
    border-color: var(--bright);
    color: var(--bright);
  }

  .tabs.roomy {
    gap: 34px;
    height: 38px;
  }

  .tabs.roomy button {
    padding-top: 4px;
  }

  .tabs.roomy button:last-child {
    margin-left: -12px;
  }

  .file-tools {
    display: flex;
    align-items: center;
    gap: 12px;
    margin: 5px 5px 0 10px;
  }

  .file-tools .search {
    width: 197px;
    margin-left: auto;
  }

  .file-list {
    display: flex;
    flex: 1;
    flex-direction: column;
    margin: 3px 5px 0;
    overflow: hidden;
    border: 1px solid var(--line);
    border-radius: 3px;
    background: #222;
  }

  .file-list table {
    width: 100%;
    border-collapse: collapse;
    table-layout: fixed;
    white-space: nowrap;
  }

  .file-list th {
    box-sizing: border-box;
    height: 21px;
    padding: 0 0 0 6px;
    background: var(--panel);
    font-weight: normal;
    text-align: left;
  }

  .file-list th svg {
    display: inline;
  }

  .file-list th:nth-child(1) {
    width: 160px;
    padding-left: 4px;
  }

  .file-list th:nth-child(2) {
    width: 64px;
  }

  .file-list th:nth-child(3) {
    width: 76px;
  }

  .file-list th:nth-child(4) {
    width: 62px;
  }

  .file-list td {
    height: 18px;
    padding: 0 0 0 8px;
    overflow: hidden;
    border-bottom: 1px solid #2a2a2a;
  }

  .file-list tbody td:first-child {
    padding-left: 6px;
  }

  .file-list .length {
    padding: 0 4px 0 0;
    text-align: right;
  }

  .file-list .selected {
    background: #484848;
    color: var(--blue);
  }

  .name {
    display: flex;
    align-items: center;
  }

  .name i {
    margin: 0 7px 0 19px;
    color: #b0b0b0;
  }

  .scrollbar {
    width: 97%;
    height: 10px;
    margin-top: auto;
    border-radius: 5px;
    background: #363636;
  }

  .preview {
    display: flex;
    align-items: center;
    justify-content: center;
    gap: 18px;
    height: 33px;
    padding-left: 7px;
  }

  .controls {
    display: flex;
    align-items: center;
    margin-top: 10px;
    padding-left: 11px;
    white-space: nowrap;
  }

  .controls > * {
    flex-shrink: 0;
  }

  .select {
    display: grid;
    margin-left: 2px;
  }

  .select select,
  .chevron {
    grid-area: 1 / 1;
  }

  .chevron {
    align-self: center;
    justify-self: end;
    margin-right: 5px;
    pointer-events: none;
  }

  .select select {
    box-sizing: border-box;
    width: 100%;
    height: 20px;
    padding: 0 5px;
    border: 1px solid var(--line);
    border-radius: 3px;
    appearance: none;
    background: #222;
    color: #d0d0d0;
    font: inherit;
  }

  .scale {
    width: 131px;
  }

  .display {
    width: 84px;
  }

  .channel {
    width: 114px;
  }

  .second {
    margin-left: 12px;
  }

  .copy {
    margin: 0 13px 0 15px;
  }

  .hold {
    position: relative;
    box-sizing: border-box;
    width: 23px;
    height: 20px;
    margin-left: 3px;
    border: 1px solid var(--line);
    border-radius: 3px;
    background: #222;
  }

  .hold::after {
    position: absolute;
    top: 21px;
    right: -1px;
    left: -1px;
    height: 4px;
    background: var(--hold);
    content: '';
  }

  .graph {
    margin: 17px 11px 20px;
    border: 1px solid var(--line);
  }

  .graph svg {
    width: 100%;
  }

  .scan {
    box-sizing: border-box;
    width: 116px;
    height: 20px;
    margin-left: 12px;
    border: 1px solid #9a9a9a;
    border-radius: 10px;
  }

  .advanced {
    align-self: flex-start;
    gap: 14px;
    margin: 6px 0 0 11px;
    color: #b8b8b8;
  }

  /* editor */
  .editor {
    border: 1px solid var(--blue);
  }

  .editor .panel-title {
    height: 26px;
    padding: 0 10px;
    color: var(--text);
  }

  .overview {
    display: grid;
    grid-template-columns: minmax(0, 1fr) 38px 20px;
    align-items: center;
    margin: 8px 21px 16px 4px;
  }

  .navigator {
    display: grid;
    position: relative;
    grid-template-columns: 5px minmax(0, 1fr) 5px;
    box-sizing: border-box;
    height: 30px;
    border: 1px solid #707070;
    border-radius: 5px;
    background: #5c5c5c;
  }

  .navigator canvas {
    width: 100%;
    height: 28px;
  }

  .handle {
    border: solid #333;
    border-width: 0 1px;
    margin: 6px 1px;
  }

  .needle {
    position: absolute;
    top: 2px;
    width: 1px;
    height: 24px;
    background: #e06060;
  }

  .timeline,
  .lane {
    display: grid;
    grid-template-columns: minmax(0, 1fr) 74px;
    margin: 0 7px;
  }

  .ruler {
    position: relative;
    border: solid #000;
    border-width: 1px 1px 1px 0;
  }

  .marker {
    position: absolute;
    top: 12px;
    margin-left: -6px;
  }

  .snap {
    display: flex;
    align-items: center;
    gap: 6px;
    padding-left: 7px;
  }

  .snap .tool {
    width: 22px;
  }

  .lanes {
    position: relative;
    padding-bottom: 6px;
  }

  canvas {
    display: block;
    width: 100%;
    height: 184px;
  }

  .wave {
    border-bottom: 1px solid #8a8a8a;
    padding-bottom: 1px;
    background: #3b3b3b;
  }

  .wave + .wave {
    padding-bottom: 4px;
    border-bottom: 0;
  }

  .scale-db {
    display: flex;
    align-items: center;
    justify-content: space-between;
    box-sizing: border-box;
    margin-bottom: -2px;
    padding-right: 1px;
    border: solid #000;
    border-width: 0 1px 1px;
    background: var(--panel);
  }

  .wave + .wave .scale-db {
    margin-bottom: -4px;
    padding-bottom: 2px;
  }

  .channel-toggle {
    box-sizing: border-box;
    width: 22px;
    height: 18px;
    margin-left: -5px;
    border: 1px solid var(--line);
    border-radius: 3px;
    background: var(--well);
    color: var(--blue);
  }

  .splitter {
    display: grid;
    grid-template-columns: 1fr auto 1fr;
    align-items: center;
    height: 9px;
    margin: 0 8px 0 7px;
    background: #353535;
  }

  .splitter span {
    grid-column: 2;
    width: 24px;
    height: 3px;
    background: repeating-linear-gradient(90deg, #9a9a9a 0 1px, transparent 1px 2px);
  }

  .splitter svg {
    justify-self: end;
    margin-right: 17px;
  }

  .spectral {
    border-bottom: 1px solid #9a8a90;
  }

  .spectral:nth-last-child(2) {
    border-color: #000;
  }

  .spectral canvas {
    height: 124px;
  }

  svg .faint {
    fill: #555;
  }

  .overlay {
    position: absolute;
    top: 0;
    right: 81px;
    bottom: 7px;
    left: 7px;
    pointer-events: none;
  }

  .fade {
    position: absolute;
    top: 2px;
    left: 12px;
  }

  .fade.out {
    right: 12px;
    left: auto;
  }

  .playhead {
    position: absolute;
    top: 0;
    bottom: 0;
    width: 1px;
    background: linear-gradient(#d85858 374px, transparent 374px 383px, #ffd0e0 383px);
  }

  /* lower dock */
  .dock {
    display: grid;
    grid-template-columns: 342px 344px 244px minmax(0, 1fr);
    gap: 4px;
    height: 94px;
    padding: 4px 1px;
  }

  .transport {
    display: flex;
    padding: 5px 0 0 21px;
    color: #b8b8b8;
  }

  .transport button {
    width: 30px;
    height: 18px;
  }

  .transport .dim {
    color: #555;
  }

  .time {
    display: block;
    padding-top: 8px;
    font-size: 45px;
    line-height: 66px;
    text-align: center;
  }

  .zoom {
    display: grid;
    grid-template-columns: repeat(5, 30px);
    row-gap: 10px;
    justify-content: center;
    padding-top: 7px;
    color: #b0b0b0;
  }

  .zoom .dim {
    color: #555;
  }

  .zoom svg {
    width: 20px;
    height: 17px;
    fill: none;
    stroke: currentColor;
  }

  .range {
    margin-left: 12px;
    border-collapse: collapse;
  }

  .range th,
  .range td {
    min-width: 69px;
    height: 20px;
    padding: 0 0 0 2px;
    font-weight: normal;
    text-align: left;
  }

  .range th {
    padding: 0 2px 0 0;
  }

  .range tr > :first-child {
    min-width: 60px;
  }

  .range td {
    color: var(--blue);
  }

  .levels {
    height: 76px;
    margin: 0 1px 2px;
  }

  .meter {
    display: grid;
    grid-template-columns: 1fr 8px;
    height: 21px;
    margin: 5px 6px 0 5px;
    border: 1px solid #000;
    background: #222;
  }

  .bars,
  .clip {
    display: grid;
    gap: 1px;
  }

  .bars i {
    border-left: 1px solid #f0e800;
    margin-left: 1px;
  }

  .clip {
    border-left: 1px solid #000;
    background: #000;
  }

  .clip i {
    background: #222;
  }

  .level-scale {
    margin: 0 17px 0 7px;
  }

  .level-scale text,
  .ruler text {
    font-size: 10px;
  }

  .status {
    display: flex;
    align-items: center;
    box-sizing: border-box;
    height: 20px;
    padding: 0 46px 0 8px;
    background: var(--panel);
    white-space: nowrap;
  }

  .status span + span {
    box-sizing: border-box;
    height: 14px;
    padding: 0 5px 0 6px;
    border-left: 1px solid #3a3a3a;
    line-height: 14px;
  }

  .status .message {
    margin-right: auto;
  }

  .status .blank {
    width: 50px;
  }

  .status .total {
    padding-left: 14px;
  }

  .status .free {
    border-right: 1px solid #3a3a3a;
  }
</style>
